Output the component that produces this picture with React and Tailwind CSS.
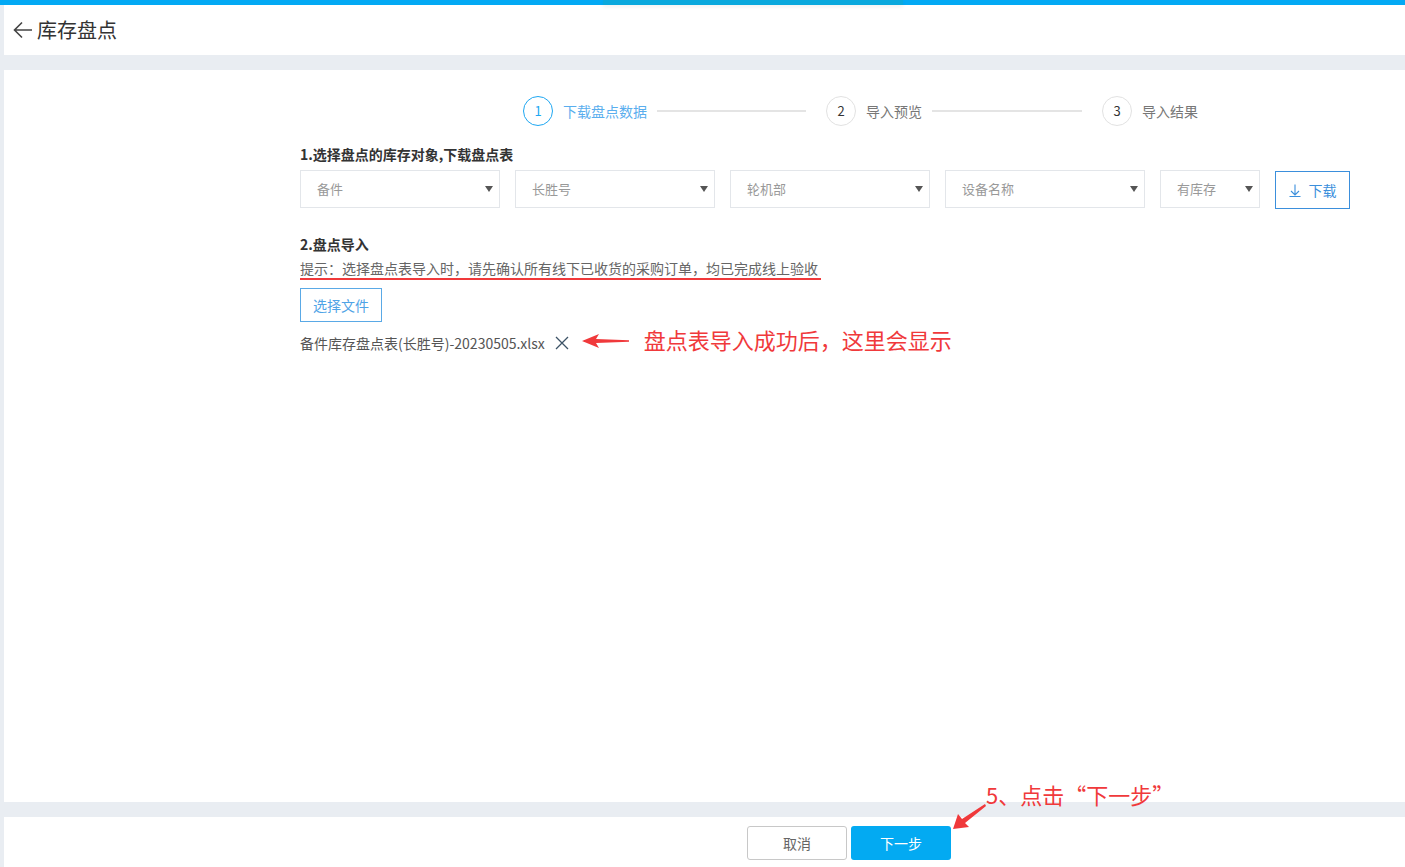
import React from "react";

const font = { fontFamily: '"Noto Sans CJK SC", "Noto Sans", sans-serif' };

function Caret() {
  return (
    <svg width="8" height="6" viewBox="0 0 8 6" className="shrink-0">
      <polygon points="0,0 8,0 4,6" fill="#555" />
    </svg>
  );
}

function Select({ label, w }) {
  return (
    <div
      className={`flex h-[38px] items-center justify-between border border-[#e3e6ea] bg-white pl-[16px] pr-[6px] ${w}`}
    >
      <span className="text-[13px] leading-[20px] text-[#999]">{label}</span>
      <Caret />
    </div>
  );
}

function Step({ n, label, active }) {
  return (
    <div className="flex items-center gap-[10px]">
      <div
        className={`flex h-[30px] w-[30px] items-center justify-center rounded-full border text-[13px] ${
          active ? "border-[#1ea7f2] text-[#1ea7f2]" : "border-[#e2e2e2] text-[#333]"
        }`}
      >
        {n}
      </div>
      <span className={`text-[14px] leading-[20px] ${active ? "text-[#5aaeee]" : "text-[#777]"}`}>{label}</span>
    </div>
  );
}

export default function App() {
  return (
    <div className="relative h-[867px] w-[1405px] overflow-hidden bg-[#e9edf2]" style={font}>
      <div className="relative h-[5px] bg-[#03a9f4]">
        <div className="absolute left-[603px] top-0 h-[5px] w-[300px] bg-[#0aa8dd] shadow-[0_2px_4px_rgba(0,0,0,0.06)]" />
      </div>
      <div className="flex">
        <div className="w-[4px] shrink-0" />
        <div className="flex flex-1 flex-col">
          {/* header */}
          <div className="flex h-[50px] items-center bg-white pl-[9px]">
            <svg width="20" height="18" viewBox="0 0 20 18" className="mr-[4px]">
              <path d="M9 1.5 L1.5 9 L9 16.5 M1.5 9 H19" fill="none" stroke="#444" strokeWidth="1.6" />
            </svg>
            <span className="text-[20px] leading-[26px] text-[#333]">库存盘点</span>
          </div>
          <div className="h-[15px]" />
          {/* content */}
          <div className="h-[732px] bg-white pl-[296px] pt-[26px]">
            <div className="flex items-center pl-[223px]">
              <Step n="1" label="下载盘点数据" active />
              <div className="ml-[10px] mr-[20px] h-[2px] w-[149px] bg-[#e4e4e4]" />
              <Step n="2" label="导入预览" />
              <div className="ml-[10px] mr-[20px] h-[2px] w-[150px] bg-[#e4e4e4]" />
              <Step n="3" label="导入结果" />
            </div>
            <div className="mt-[18px] text-[14px] font-bold leading-[20px] text-[#333]">
              1.选择盘点的库存对象,下载盘点表
            </div>
            <div className="mt-[5px] flex items-center gap-[15px]">
              <Select label="备件" w="w-[200px]" />
              <Select label="长胜号" w="w-[200px]" />
              <Select label="轮机部" w="w-[200px]" />
              <Select label="设备名称" w="w-[200px]" />
              <Select label="有库存" w="w-[100px]" />
              <div className="mt-[2px] flex h-[38px] w-[75px] items-center justify-center gap-[8px] border border-[#3b8fdc] text-[14px] text-[#3b8fdc]">
                <svg width="12" height="13" viewBox="0 0 12 13">
                  <path d="M6 0.5 V11 M2 7 L6 11 L10 7 M0.5 12.5 H11.5" fill="none" stroke="#3b8fdc" strokeWidth="1.1" />
                </svg>
                <span>下载</span>
              </div>
            </div>
            <div className="mt-[25px] text-[14px] font-bold leading-[20px] text-[#333]">2.盘点导入</div>
            <div className="mt-[4px] inline-block border-b-2 border-[#f0393b] pr-[3px] text-[14px] leading-[20px] text-[#666]">
              提示：选择盘点表导入时，请先确认所有线下已收货的采购订单，均已完成线上验收
            </div>
            <div className="mt-[8px] flex h-[34px] w-[82px] items-center justify-center border border-[#5aa9e6] text-[14px] text-[#4fa3e6]">
              选择文件
            </div>
            <div className="mt-[11px] flex h-[20px] items-center">
              <span className="text-[14px] leading-[20px] text-[#555]">备件库存盘点表(长胜号)-20230505.xlsx</span>
              <svg width="14" height="14" viewBox="0 0 14 14" className="ml-[10px]">
                <path d="M1 1 L13 13 M13 1 L1 13" stroke="#3d5366" strokeWidth="1.3" />
              </svg>
              <svg width="48" height="16" viewBox="0 0 48 16" className="-mt-[4px] ml-[13px]">
                <polygon points="0,8 17,1 14,6 47,7.2 47,8.8 14,10 17,15" fill="#f0393b" />
              </svg>
              <span className="-mt-[9px] ml-[14px] text-[22px] leading-[28px] text-[#f0393b]">盘点表导入成功后，这里会显示</span>
            </div>
          </div>
          <div className="h-[15px]" />
          {/* footer */}
          <div className="flex h-[50px] items-start gap-[4px] bg-white pl-[743px] pt-[9px]">
            <div className="flex h-[34px] w-[100px] items-center justify-center rounded-[3px] border border-[#c8c8c8] text-[14px] text-[#666]">
              取消
            </div>
            <div className="flex h-[34px] w-[100px] items-center justify-center rounded-[3px] bg-[#03aaf2] text-[14px] text-white">
              下一步
            </div>
          </div>
        </div>
      </div>
      {/* annotation */}
      <div className="absolute left-[986px] top-[780px] text-[22px] leading-[28px] text-[#f0393b]">5、点击“下一步”</div>
      <svg className="absolute left-[950px] top-[800px]" width="40" height="32" viewBox="0 0 40 32">
        <polygon points="3,29 8,14 12,19 35,4 36,6 15,23 19,27" fill="#f0393b" />
      </svg>
    </div>
  );
}
